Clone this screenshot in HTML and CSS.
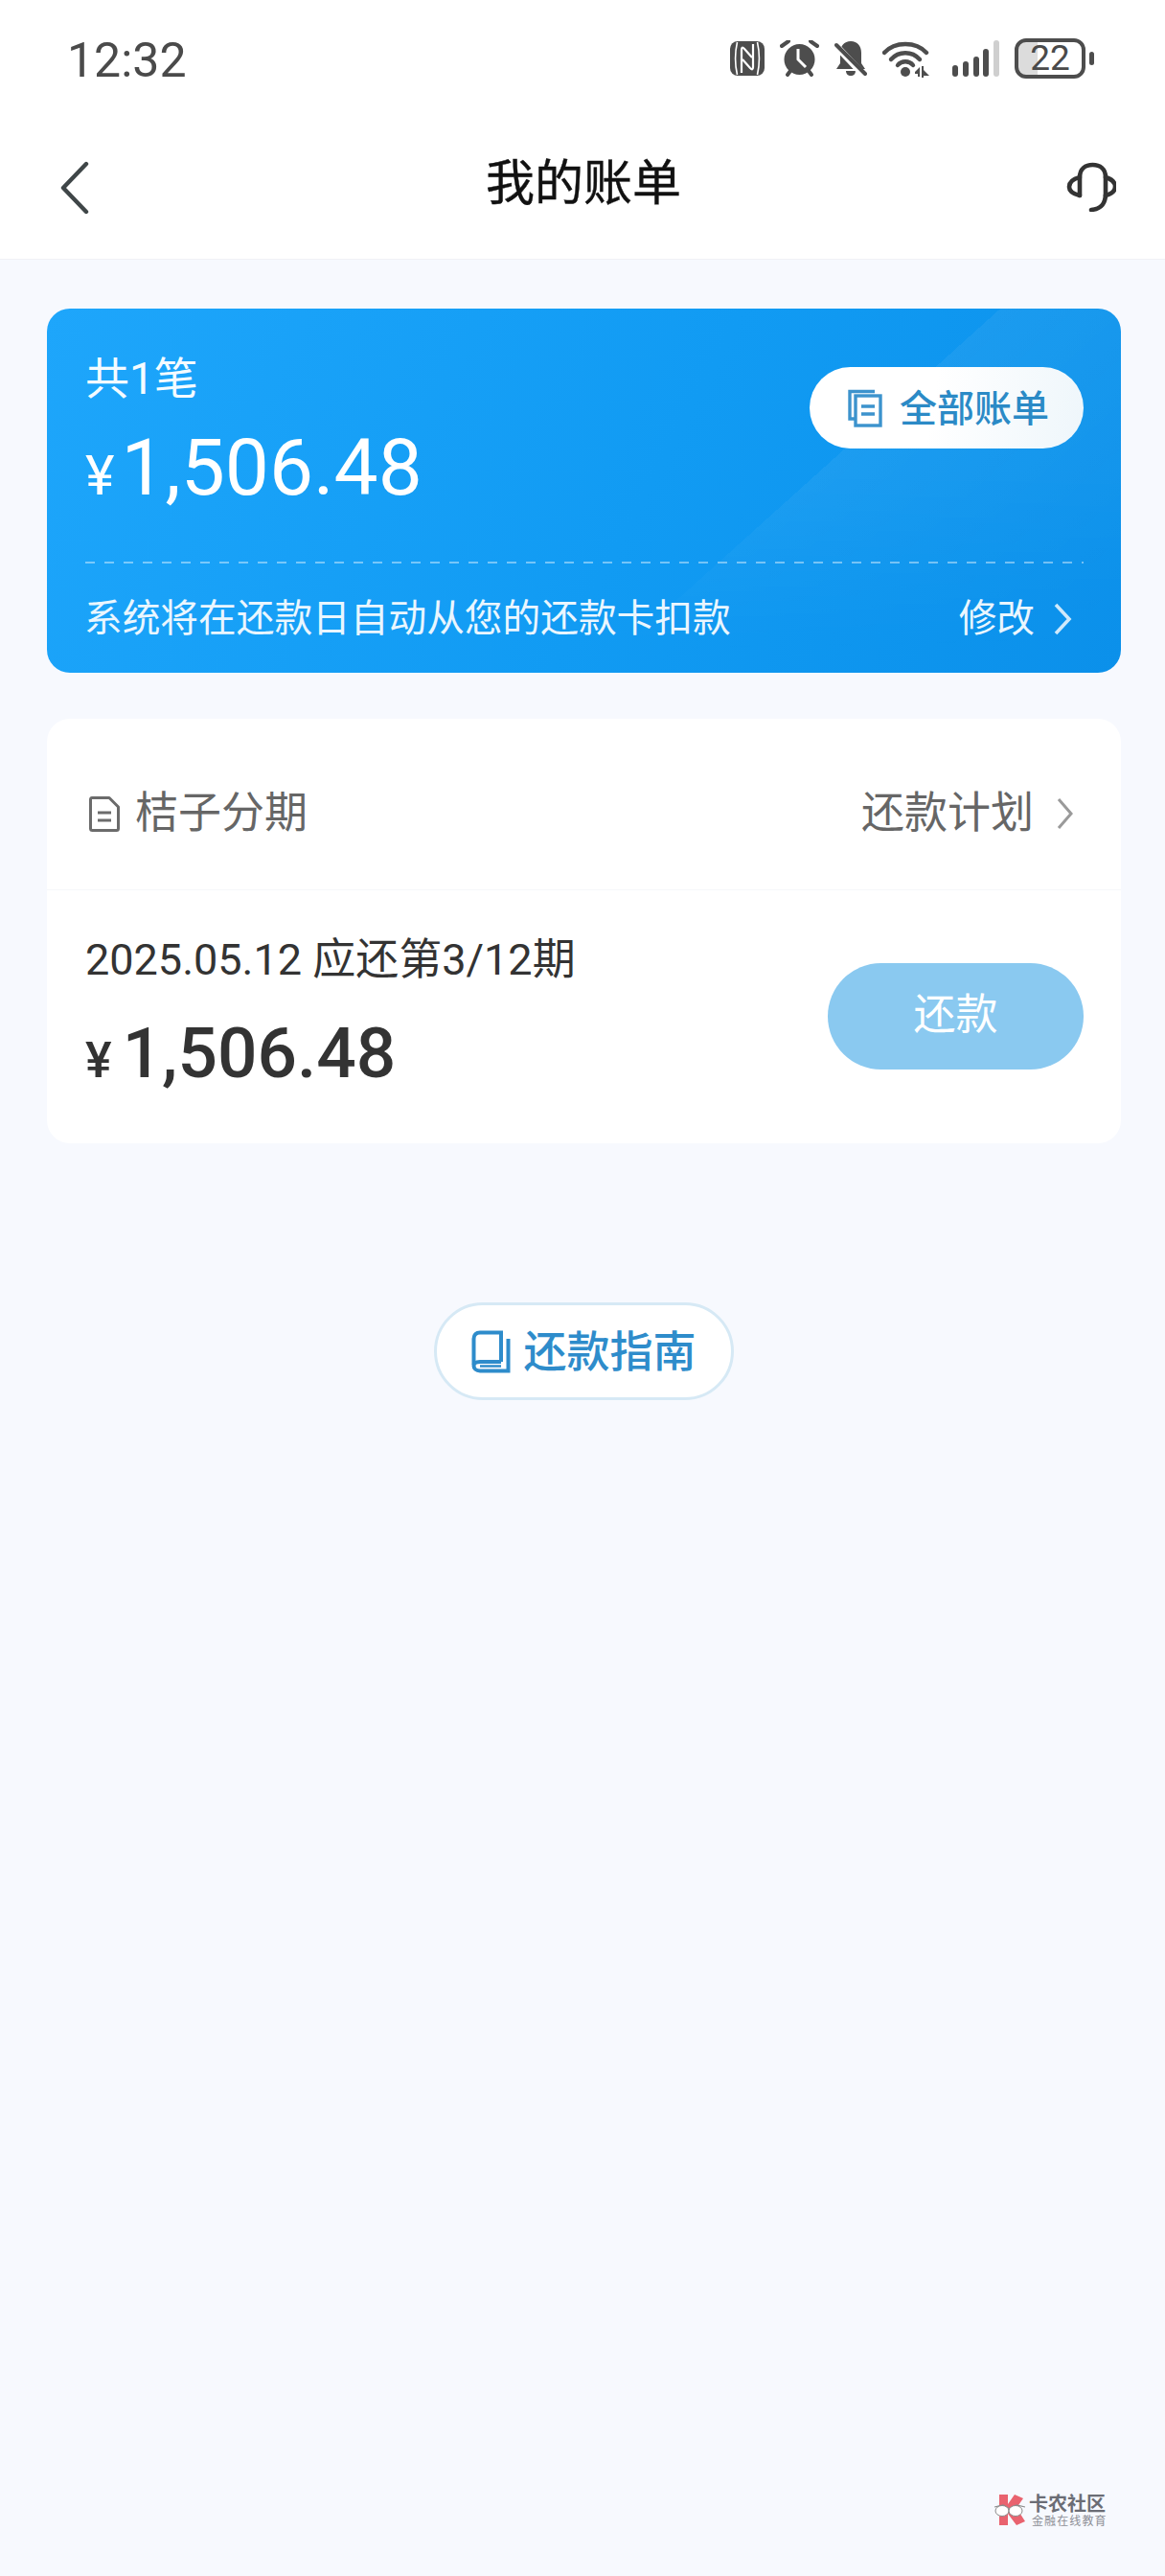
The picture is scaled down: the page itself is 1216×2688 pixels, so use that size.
FILE: index.html
```html
<!DOCTYPE html>
<html lang="zh-CN">
<head>
<meta charset="utf-8">
<title>我的账单</title>
<link rel="stylesheet" href="styles.css">
</head>
<body>
<div class="page">
  <header class="top">
    <div class="status">
      <span class="clock">12:32</span>
      <div class="status-icons">
        <!-- NFC -->
        <svg class="ic-nfc" viewBox="0 0 36 36" width="36" height="36">
          <rect width="36" height="36" rx="8" fill="#4d4d4d"/>
          <path d="M7.500 1C5 12 5 24 7.500 35M28.500 1C31 12 31 24 28.500 35" fill="none" stroke="#fff" stroke-width="1.600"/>
          <path d="M12 33V9Q12 5 15 8L23 17M24 3V27Q24 31 21 28L13 19" fill="none" stroke="#fff" stroke-width="2.200"/>
        </svg>
        <!-- alarm -->
        <svg viewBox="0 0 41 38" width="41" height="38">
          <circle cx="20.500" cy="20" r="16" fill="#4d4d4d"/>
          <path d="M2 6 9 1M39 6 32 1M8 36l3-4M33 36l-3-4" stroke="#4d4d4d" stroke-width="4" stroke-linecap="round"/>
          <path d="M19 9V20L27 28" fill="none" stroke="#fff" stroke-width="3"/>
        </svg>
        <!-- muted bell -->
        <svg viewBox="0 0 34 38" width="34" height="38">
          <path d="M17 1C24 1 28 6 28 13V24L32 30H2L6 24V13C6 6 10 1 17 1Z" fill="#4d4d4d"/>
          <path d="M12 32H22C22 35 20 37 17 37S12 35 12 32Z" fill="#4d4d4d"/>
          <path d="M-1 3 31 37" stroke="#fff" stroke-width="7"/>
          <path d="M2 5 32 35" stroke="#4d4d4d" stroke-width="4" stroke-linecap="round"/>
        </svg>
        <!-- wifi -->
        <svg viewBox="0 0 49 39" width="49" height="39">
          <g fill="none" stroke="#4d4d4d" stroke-width="4.400" stroke-linecap="round">
            <path d="M2 13C13 1 35 1 46 13"/>
            <path d="M9 20C17 11 31 11 39 20"/>
            <path d="M16 26C20 21 28 21 32 26"/>
          </g>
          <circle cx="24" cy="33" r="5" fill="#4d4d4d"/>
          <path d="M34 33 39 28V38H37V35H34ZM41 27H43V31L49 37H43V39H41Z" fill="#4d4d4d"/>
        </svg>
        <!-- signal bars -->
        <svg class="ic-signal" viewBox="0 0 49 38" width="49" height="38">
          <rect x="0" y="26" width="6" height="12" rx="3" fill="#4d4d4d"/>
          <rect x="11" y="22" width="6" height="16" rx="3" fill="#4d4d4d"/>
          <rect x="22" y="17" width="6" height="21" rx="3" fill="#4d4d4d"/>
          <rect x="32" y="9" width="6" height="29" rx="3" fill="#4d4d4d"/>
          <rect x="43" y="0" width="6" height="38" rx="3" fill="#cfcfcf"/>
        </svg>
        <div class="battery">
          <div class="battery-body"><span class="battery-num">22</span></div>
          <i class="battery-nub"></i>
        </div>
      </div>
    </div>
    <nav class="nav">
      <svg class="nav-back" viewBox="0 0 31 56" width="31" height="56">
        <path d="M28 3 4 28 28 53" fill="none" stroke="#3f4648" stroke-width="4.400" stroke-linecap="round" stroke-linejoin="round"/>
      </svg>
      <h1 class="nav-title">我的账单</h1>
      <svg class="nav-help" viewBox="0 0 52 52" width="52" height="52">
        <g fill="none" stroke="#333" stroke-width="4.600" stroke-linecap="round" stroke-linejoin="round">
          <path d="M14 35V16C14 7 20 3 27.500 3S41 7 41 16V33C41 44 36 49 26 50"/>
          <path d="M14 16C6 18 3 22 3 26S6 33 14 35"/>
          <path d="M41 16C48 18 51 22 51 26S48 33 41 35"/>
        </g>
      </svg>
    </nav>
  </header>

  <main class="content">
    <section class="hero">
      <div class="hero-top">
        <div class="hero-sum">
          <div class="hero-count">共1笔</div>
          <div class="hero-amount"><span class="hero-yen">¥</span><span>1,506.48</span></div>
        </div>
        <button class="pill">
          <svg viewBox="0 0 36 41" width="36" height="41">
            <g fill="none" stroke="#3c93cd" stroke-width="3.400">
              <path d="M28 3.500H2V32H7"/>
              <rect x="8" y="8" width="26" height="31" fill="#fff"/>
              <path d="M14 19H28M14 27H28"/>
            </g>
          </svg>
          <span>全部账单</span>
        </button>
      </div>
      <div class="hero-dash"></div>
      <div class="hero-bottom">
        <span>系统将在还款日自动从您的还款卡扣款</span>
        <span class="hero-edit">修改
          <svg viewBox="0 0 20 34" width="20" height="34">
            <path d="M3 2 17 17 3 32" fill="none" stroke="#cfe9fb" stroke-width="3.600"/>
          </svg>
        </span>
      </div>
    </section>

    <section class="bill">
      <div class="bill-head">
        <div class="bill-name">
          <svg viewBox="0 0 32 37" width="32" height="37">
            <g fill="none" stroke="#6b6b6b" stroke-width="3">
              <path d="M3 1.500H21L30.500 11V33.500Q30.500 35.500 28.500 35.500H3.500Q1.500 35.500 1.500 33.500V3.500Q1.500 1.500 3 1.500Z" stroke-linejoin="round"/>
              <path d="M9 17H23M9 25H23"/>
            </g>
          </svg>
          <span>桔子分期</span>
        </div>
        <div class="bill-plan">
          <span>还款计划</span>
          <svg viewBox="0 0 17 34" width="17" height="34">
            <path d="M2 2 15 17 2 32" fill="none" stroke="#9a9a9a" stroke-width="3"/>
          </svg>
        </div>
      </div>
      <div class="bill-row">
        <div>
          <div class="bill-date">2025.05.12 应还第3/12期</div>
          <div class="bill-amount"><span class="bill-yen">¥</span><span>1,506.48</span></div>
        </div>
        <button class="repay">还款</button>
      </div>
    </section>

    <button class="guide">
      <svg viewBox="0 0 41 45" width="41" height="45">
        <g fill="none" stroke="#2e8ccb" stroke-width="4">
          <path d="M31 33V2.500H9C5 2.500 2.500 5 2.500 9V36"/>
          <path d="M38.500 9V42.500H9C5 42.500 2.500 40 2.500 37S5 33 9 33H31"/>
          <path d="M9 37.500H31" stroke-width="2.500"/>
        </g>
      </svg>
      <span class="guide-label">还款指南</span>
    </button>
  </main>

  <aside class="mark">
    <svg viewBox="0 0 34 34" width="34" height="34">
      <path d="M6 1H15V11L22 1 31 5 24 15 33 29 24 33 15 21V33H6Z" fill="#e9636f"/>
      <path d="M1 14 10 12 17 16 24 12 33 14" fill="none" stroke="#8a8a8a" stroke-width="1.200"/>
      <ellipse cx="9" cy="18" rx="7" ry="5.500" fill="#fff" stroke="#8a8a8a" stroke-width="1"/>
      <ellipse cx="23" cy="18" rx="7" ry="5.500" fill="#fff" stroke="#8a8a8a" stroke-width="1"/>
    </svg>
    <div>
      <div class="mark-name">卡农社区</div>
      <div class="mark-sub">金融在线教育</div>
    </div>
  </aside>
</div>
</body>
</html>
```
FILE: styles.css
```css
* { box-sizing: border-box; }

html, body { margin: 0; padding: 0; }

body {
  width: 1216px;
  height: 2688px;
  overflow: hidden;
  background: #f7f9fe;
  font-family: Roboto, "Noto Sans CJK SC", sans-serif;
  color: #333;
}

.page {
  position: relative;
  height: 2688px;
}

button {
  font-family: inherit;
  border: 0;
  padding: 0;
  margin: 0;
}

/* top bar */
.top {
  height: 271px;
  background: #fff;
  border-bottom: 1px solid #f0f1f5;
}

.status {
  height: 122px;
  padding: 0 74px 0 70px;
  display: flex;
  align-items: center;
  justify-content: space-between;
}

.clock {
  margin-top: 3px;
  font-size: 50px;
  line-height: 56px;
  color: #4a4a4a;
}

.status-icons {
  display: flex;
  align-items: center;
  gap: 16px;
}

.ic-signal { margin-left: 8px; }

.battery {
  display: flex;
  align-items: center;
  gap: 4px;
}

.battery-body {
  width: 74px;
  height: 42px;
  border: 4px solid #4d4d4d;
  border-radius: 12px;
  display: flex;
  align-items: center;
  justify-content: center;
  background: linear-gradient(90deg, #dcdcdc 0 20px, #fff 20px);
}

.battery-num {
  font-size: 37px;
  line-height: 34px;
  color: #4a4a4a;
}

.battery-nub {
  width: 5px;
  height: 14px;
  border-radius: 3px;
  background: #4d4d4d;
}

.nav {
  height: 148px;
  padding: 0 51px 0 62px;
  display: flex;
  align-items: center;
  justify-content: space-between;
}

.nav-title {
  margin: 0 0 8px 12px;
  font-size: 51px;
  line-height: 60px;
  font-weight: 400;
  color: #111;
  -webkit-text-stroke: 0.4px #111;
}

.nav-help { margin-bottom: 3px; }

/* page body */
.content {
  padding: 51px 46px 0 49px;
  display: flex;
  flex-direction: column;
  align-items: stretch;
}

/* blue summary card */
.hero {
  position: relative;
  height: 380px;
  border-radius: 24px;
  color: #fff;
  background: linear-gradient(118deg, #1ea6fb 0%, #119bf3 55%, #0b90ea 100%);
}

/* diagonal sheen on the card, fading out toward the footer */
.hero::before {
  content: "";
  position: absolute;
  inset: 0;
  border-radius: 24px;
  background: linear-gradient(138deg, transparent 64.500%, rgba(255, 255, 255, 0.055) 64.500%, rgba(255, 255, 255, 0.02) 95%);
  -webkit-mask-image: linear-gradient(to bottom, #000 45%, transparent 95%);
  mask-image: linear-gradient(to bottom, #000 45%, transparent 95%);
}

.hero > * { position: relative; }

.hero-top {
  height: 264px;
  padding: 43px 39px 0 40px;
  display: flex;
  justify-content: space-between;
  align-items: flex-start;
}

.hero-count {
  font-size: 46px;
  line-height: 60px;
  color: #f4fbff;
}

.hero-amount {
  margin-top: 20px;
  display: flex;
  align-items: baseline;
  font-size: 82px;
  line-height: 86px;
}

.hero-yen {
  font-size: 58px;
  margin-right: 7px;
}

.pill {
  margin-top: 18px;
  width: 286px;
  height: 85px;
  border-radius: 43px;
  background: linear-gradient(100deg, #fff 45%, #eef6fb 100%);
  color: #2b8ac6;
  font-size: 39px;
  font-weight: 500;
  display: flex;
  align-items: center;
  gap: 18px;
  padding-left: 40px;
}

.pill span { margin-bottom: 5px; }

.hero-dash {
  height: 2px;
  margin: 0 39px 0 40px;
  background: repeating-linear-gradient(90deg, rgba(255, 255, 255, 0.42) 0 10px, transparent 10px 20px);
}

.hero-bottom {
  height: 114px;
  padding: 2px 51px 0 39px;
  display: flex;
  align-items: center;
  justify-content: space-between;
  font-size: 39.700px;
  line-height: 50px;
  color: #eaf6fe;
}

.hero-edit {
  display: flex;
  align-items: center;
  gap: 19px;
}

/* bill card */
.bill {
  margin-top: 48px;
  height: 443px;
  border-radius: 24px;
  background: #fff;
}

.bill-head {
  height: 179px;
  padding: 20px 50px 0 44px;
  border-bottom: 1px solid #f6f7fa;
  display: flex;
  align-items: center;
  justify-content: space-between;
  font-size: 45px;
  line-height: 56px;
  color: #666;
}

.bill-name {
  display: flex;
  align-items: center;
  gap: 16px;
}

.bill-plan {
  display: flex;
  align-items: center;
  gap: 24px;
}

.bill-row {
  height: 264px;
  padding: 0 39px 0 40px;
  display: flex;
  align-items: center;
  justify-content: space-between;
}

.bill-date {
  font-size: 45px;
  line-height: 56px;
  color: #333;
}

.bill-amount {
  margin-top: 27px;
  display: flex;
  align-items: baseline;
  font-size: 73px;
  line-height: 84px;
  font-weight: 500;
  color: #333;
}

.bill-yen {
  font-size: 52px;
  margin-right: 11px;
}

.repay {
  width: 267px;
  height: 111px;
  margin-bottom: 2px;
  padding-bottom: 10px;
  border-radius: 56px;
  background: #8ac9f0;
  color: #fff;
  font-size: 44px;
}

/* repayment guide */
.guide {
  align-self: center;
  margin-top: 166px;
  width: 313px;
  height: 102px;
  border-radius: 51px;
  border: 3px solid #d6e9f5;
  background: #fff;
  color: #2e8ccb;
  font-size: 45px;
  font-weight: 500;
  display: flex;
  align-items: center;
  justify-content: center;
  gap: 13px;
}

.guide-label { margin-bottom: 5px; }

/* community watermark */
.mark {
  position: absolute;
  left: 1037px;
  top: 2602px;
  display: flex;
  gap: 3px;
}

.mark-name {
  font-size: 20px;
  line-height: 22px;
  font-weight: 700;
  color: #6b6d75;
}

.mark-sub {
  margin-top: 1px;
  font-size: 12px;
  line-height: 13px;
  letter-spacing: 1.100px;
  color: #8d8f96;
  padding-left: 3px;
}
```
